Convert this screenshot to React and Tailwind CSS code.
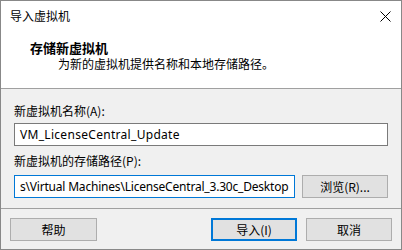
import React from 'react';

const cjk = { fontFamily: '"Noto Sans CJK SC", "Noto Sans", sans-serif' };
const latin = { fontFamily: '"Noto Sans", sans-serif' };

const Button = ({ children, primary, className = '' }) => (
  <div
    className={`flex items-center justify-center h-[23px] bg-[#e1e1e1] text-[12px] text-black ${
      primary ? 'border-2 border-[#0078d7]' : 'border border-[#adadad]'
    } ${className}`}
  >
    {children}
  </div>
);

export default function App() {
  return (
    <div
      className="w-[402px] h-[250px] bg-[#f0f0f0] border border-[#888888] flex flex-col overflow-hidden"
      style={cjk}
    >
      {/* Title bar */}
      <div className="h-[30px] bg-white flex items-center justify-between shrink-0">
        <span className="pl-[9px] text-[12px] leading-[16px] text-black">导入虚拟机</span>
        <svg width="11" height="11" viewBox="0 0 11 11" className="mr-[10px]">
          <path d="M0.5 0.5 L10.5 10.5 M10.5 0.5 L0.5 10.5" stroke="#000" strokeWidth="1" />
        </svg>
      </div>

      {/* Header */}
      <div className="h-[58px] bg-white border-b border-[#a0a0a0] pt-[9px] shrink-0">
        <div className="pl-[29px] text-[13px] font-bold leading-[16px] text-black">存储新虚拟机</div>
        <div className="pl-[57px] text-[12px] leading-[15px] text-black">为新的虚拟机提供名称和本地存储路径。</div>
      </div>

      {/* Body */}
      <div className="px-[13px] pt-[14px] h-[120px] border-b border-[#a0a0a0] shrink-0">
        <div className="text-[12px] leading-[16px] text-black">新虚拟机名称(A):</div>
        <div className="mt-[4px] h-[23px] bg-white border border-[#7a7a7a] flex items-center pl-[5px]">
          <span className="text-[12px] text-black tracking-[0.3px]" style={latin}>
            VM_LicenseCentral_Update
          </span>
        </div>
        <div className="mt-[7px] text-[12px] leading-[16px] text-black">新虚拟机的存储路径(P):</div>
        <div className="mt-[6px] flex items-center gap-[7px]">
          <div className="w-[281px] h-[23px] bg-white border border-[#0078d7] flex items-center pl-[5px] overflow-hidden whitespace-nowrap">
            <span className="text-[12px] text-black tracking-[-0.2px]" style={latin}>
              s\Virtual Machines\LicenseCentral_3.30c_Desktop
            </span>
          </div>
          <Button className="w-[86px]">浏览(R)...</Button>
        </div>
      </div>

      {/* Footer */}
      <div className="flex items-start pt-[9px] px-[9px]">
        <Button className="w-[87px]">帮助</Button>
        <div className="flex-1" />
        <Button primary className="w-[86px]">导入(I)</Button>
        <Button className="w-[86px] ml-[9px]">取消</Button>
      </div>
    </div>
  );
}
